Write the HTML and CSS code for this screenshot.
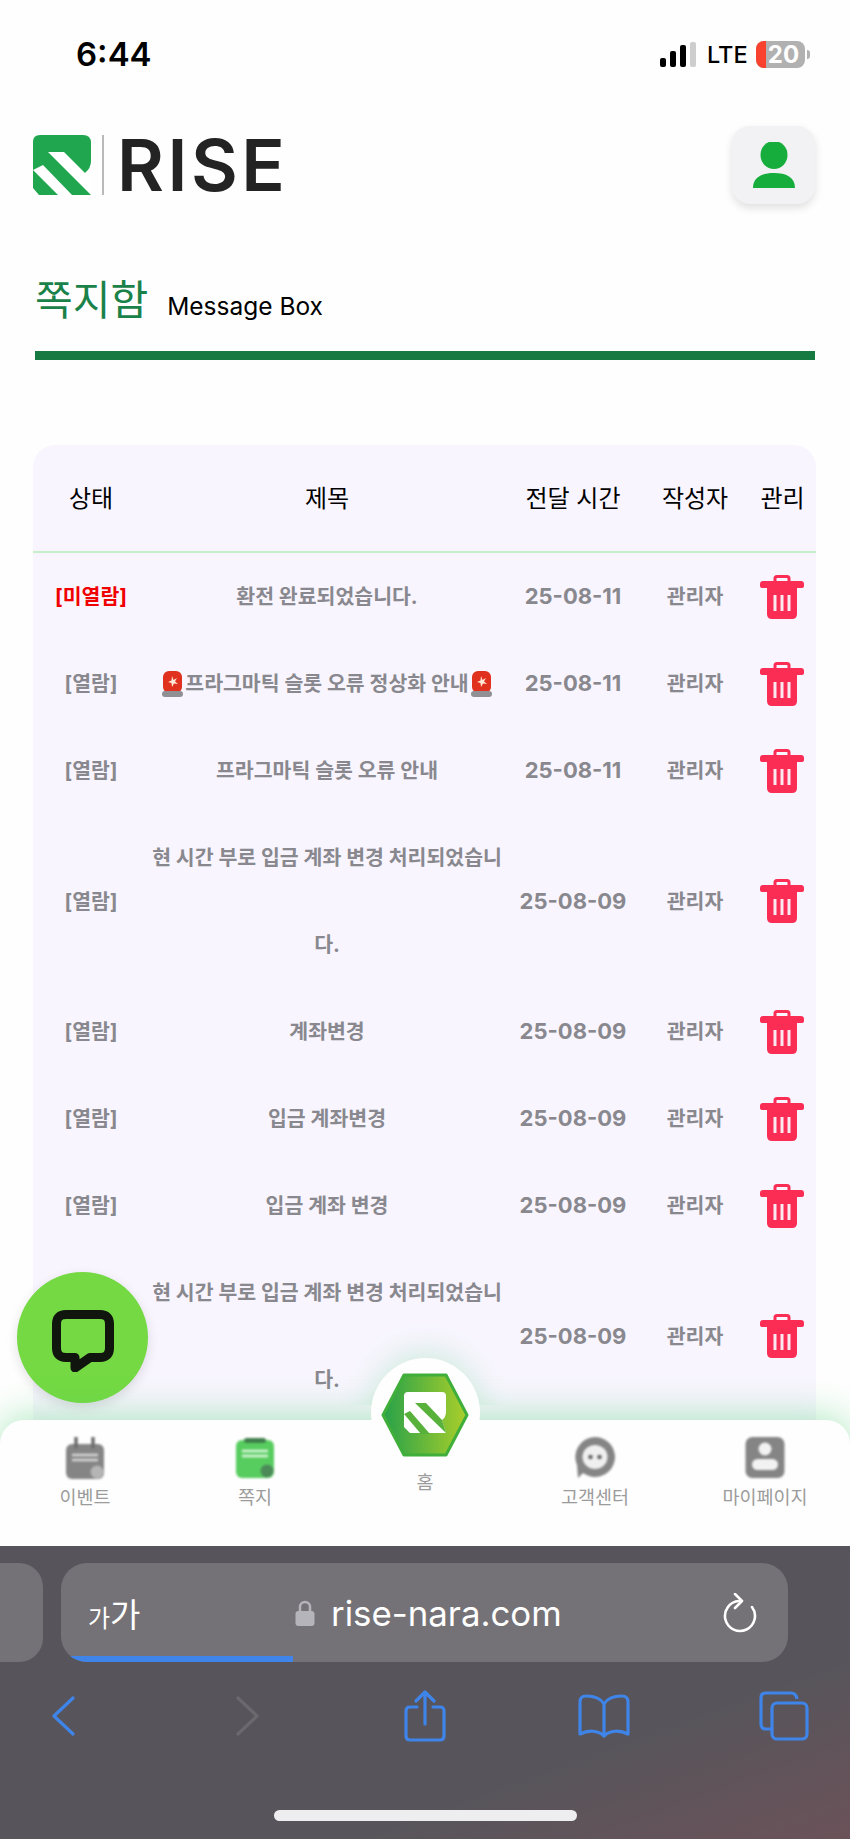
FILE: index.html
```html
<!DOCTYPE html>
<html lang="ko">
<head>
  <meta charset="UTF-8">
  <meta name="viewport" content="width=device-width, initial-scale=1.0">
  <title>RISE 쪽지함</title>
  <link rel="stylesheet" href="styles.css">
</head>
<body>
  <div class="page">
    <div class="status-bar">
      <span class="clock">6:44</span>
      <div class="status-right">
        <div class="signal">
          <i class="bar-1"></i><i class="bar-2"></i><i class="bar-3"></i><i class="bar-4"></i>
        </div>
        <span class="network">LTE</span>
        <div class="battery"><span class="battery-red"></span><span class="battery-num">20</span></div>
        <span class="battery-tip"></span>
      </div>
    </div>

    <header class="site-header">
      <div class="logo">
        <svg class="logo-mark" viewBox="0 0 59 60">
          <path d="M7 0H50Q58 0 58 8V26Q58 33 52 38L59 60H6L0 53V7Q0 0 7 0Z" fill="#1fa64f"/>
          <path d="M15 17H31L52 38H60V61H59Z" fill="#fff"/>
          <path d="M0 35L10 30L40 61H26Z" fill="#fff"/>
        </svg>
        <span class="logo-line"></span>
        <span class="logo-text">RISE</span>
      </div>
      <button class="profile-button">
        <svg viewBox="0 0 44 46" width="44" height="46">
          <ellipse cx="22" cy="13" rx="13.5" ry="14" fill="#17ad3c"/>
          <path d="M1 46C1 35 10 31 22 31S43 35 43 46Z" fill="#17ad3c"/>
        </svg>
      </button>
    </header>

    <div class="title-row">
      <h1>쪽지함</h1>
      <span class="title-en">Message Box</span>
    </div>

    <div class="message-card">
      <table class="message-table">
        <thead>
          <tr>
            <th class="col-status">상태</th>
            <th class="col-title">제목</th>
            <th class="col-time">전달 시간</th>
            <th class="col-author">작성자</th>
            <th class="col-manage">관리</th>
          </tr>
        </thead>
        <tbody>
          <tr>
            <td class="unread">[미열람]</td>
            <td>환전 완료되었습니다.</td>
            <td class="date">25-08-11</td>
            <td>관리자</td>
            <td class="manage"><svg class="trash"><use href="#trash-icon"/></svg></td>
          </tr>
          <tr>
            <td>[열람]</td>
            <td><svg class="siren"><use href="#siren-icon"/></svg>프라그마틱 슬롯 오류 정상화 안내<svg class="siren"><use href="#siren-icon"/></svg></td>
            <td class="date">25-08-11</td>
            <td>관리자</td>
            <td class="manage"><svg class="trash"><use href="#trash-icon"/></svg></td>
          </tr>
          <tr>
            <td>[열람]</td>
            <td>프라그마틱 슬롯 오류 안내</td>
            <td class="date">25-08-11</td>
            <td>관리자</td>
            <td class="manage"><svg class="trash"><use href="#trash-icon"/></svg></td>
          </tr>
          <tr>
            <td>[열람]</td>
            <td>현 시간 부로 입금 계좌 변경 처리되었습니다.</td>
            <td class="date">25-08-09</td>
            <td>관리자</td>
            <td class="manage"><svg class="trash"><use href="#trash-icon"/></svg></td>
          </tr>
          <tr>
            <td>[열람]</td>
            <td>계좌변경</td>
            <td class="date">25-08-09</td>
            <td>관리자</td>
            <td class="manage"><svg class="trash"><use href="#trash-icon"/></svg></td>
          </tr>
          <tr>
            <td>[열람]</td>
            <td>입금 계좌변경</td>
            <td class="date">25-08-09</td>
            <td>관리자</td>
            <td class="manage"><svg class="trash"><use href="#trash-icon"/></svg></td>
          </tr>
          <tr>
            <td>[열람]</td>
            <td>입금 계좌 변경</td>
            <td class="date">25-08-09</td>
            <td>관리자</td>
            <td class="manage"><svg class="trash"><use href="#trash-icon"/></svg></td>
          </tr>
          <tr>
            <td>[열람]</td>
            <td>현 시간 부로 입금 계좌 변경 처리되었습니다.</td>
            <td class="date">25-08-09</td>
            <td>관리자</td>
            <td class="manage"><svg class="trash"><use href="#trash-icon"/></svg></td>
          </tr>
        </tbody>
      </table>
    </div>

    <button class="chat-button">
      <svg viewBox="0 0 62 62" width="62" height="62">
        <path d="M14 4.500H48Q57.500 4.500 57.500 14V38Q57.500 47.500 48 47.500H38L23 58V47.500H14Q4.500 47.500 4.500 38V14Q4.500 4.500 14 4.500Z" fill="none" stroke="#10160e" stroke-width="9" stroke-linejoin="round"/>
      </svg>
    </button>

    <nav class="bottom-nav">
      <a class="nav-item">
        <svg class="nav-icon" viewBox="0 0 40 42">
          <rect x="1" y="7" width="38" height="35" rx="6" fill="#858585"/>
          <path d="M11 1V10M28 1V10" stroke="#6d6d6d" stroke-width="3.500" stroke-linecap="round"/>
          <path d="M7 18H33M7 23H33" stroke="#d6d6d6" stroke-width="2.500"/>
          <circle cx="32" cy="35" r="6.500" fill="#b5b5b5"/>
        </svg>
        <span>이벤트</span>
      </a>
      <a class="nav-item">
        <svg class="nav-icon" viewBox="0 0 40 42">
          <rect x="1" y="3" width="38" height="38" rx="6" fill="#58cd5f"/>
          <rect x="9" y="1" width="22" height="5" rx="2.500" fill="#3f7f4b"/>
          <path d="M7 14H33M7 19H33" stroke="#d8f5da" stroke-width="2.500"/>
          <circle cx="32" cy="34" r="6.500" fill="#4c8a58"/>
        </svg>
        <span>쪽지</span>
      </a>
      <a class="nav-item nav-home">
        <span class="home-circle">
          <svg viewBox="0 0 88 84" width="88" height="84">
            <defs>
              <linearGradient id="hexFill" x1="0" y1="0" x2="1" y2="0">
                <stop offset="0" stop-color="#27a14a"/>
                <stop offset="1" stop-color="#aacf2a"/>
              </linearGradient>
            </defs>
            <path d="M23 2H65L86 42L65 82H23L2 42Z" fill="url(#hexFill)" stroke="#3fae3a" stroke-width="3" stroke-linejoin="round"/>
            <path d="M27 19H61Q65 19 65 23V39Q65 44 61 47L65 60H29L23 54V23Q23 19 27 19Z" fill="#fff"/>
            <path d="M34 30H45L61 47L65 60Z" fill="#58b13a"/>
            <path d="M23 41L29 38L49 61H40Z" fill="#58b13a"/>
          </svg>
        </span>
        <span>홈</span>
      </a>
      <a class="nav-item">
        <svg class="nav-icon" viewBox="0 0 40 42">
          <path d="M20 0A20 20 0 1 1 8 36L3 41L2 28A20 20 0 0 1 20 0Z" fill="#858585"/>
          <ellipse cx="20" cy="20" rx="12.500" ry="12" fill="#efefef"/>
          <circle cx="15.500" cy="20" r="2.300" fill="#666"/>
          <circle cx="24.500" cy="20" r="2.300" fill="#666"/>
        </svg>
        <span>고객센터</span>
      </a>
      <a class="nav-item">
        <svg class="nav-icon" viewBox="0 0 40 42">
          <rect x="0.500" y="0" width="39" height="41" rx="7" fill="#858585"/>
          <circle cx="20" cy="12" r="6.500" fill="#f2f2f2"/>
          <rect x="7" y="22" width="26" height="11" rx="5.500" fill="#f2f2f2"/>
        </svg>
        <span>마이페이지</span>
      </a>
    </nav>
  </div>

  <div class="safari">
    <div class="url-row">
      <div class="tab-peek"></div>
      <div class="url-bar">
        <span class="text-size"><small>가</small>가</span>
        <div class="url-center">
          <svg viewBox="0 0 20 28" width="20" height="28">
            <path d="M5 13V8A5 5 0 0 1 15 8V13" fill="none" stroke="#b4b4ba" stroke-width="2.500"/>
            <rect x="0.500" y="12" width="19" height="15" rx="3" fill="#b4b4ba"/>
          </svg>
          <span class="url-text">rise-nara.com</span>
        </div>
        <svg class="reload" viewBox="0 0 34 40" width="34" height="40" fill="none" stroke="#fff" stroke-width="2.600" stroke-linecap="round" stroke-linejoin="round">
          <path d="M16 8A15 15 0 1 0 29 14"/>
          <path d="M12 1L19 8L12 15"/>
        </svg>
        <span class="progress"></span>
      </div>
    </div>
    <div class="toolbar">
      <svg viewBox="0 0 24 40" width="24" height="40" fill="none" stroke="#3f84e8" stroke-width="3.200" stroke-linecap="round" stroke-linejoin="round"><path d="M22 2L3 20L22 38"/></svg>
      <svg class="tool-forward" viewBox="0 0 24 40" width="24" height="40" fill="none" stroke="#6b696e" stroke-width="3.200" stroke-linecap="round" stroke-linejoin="round"><path d="M2 2L21 20L2 38"/></svg>
      <svg class="tool-share" viewBox="0 0 42 52" width="42" height="52" fill="none" stroke="#3f84e8" stroke-width="3.200" stroke-linecap="round" stroke-linejoin="round"><path d="M13 17H6Q2 17 2 21V46Q2 50 6 50H36Q40 50 40 46V21Q40 17 36 17H29"/><path d="M21 34V3M12 11L21 2L30 11"/></svg>
      <svg class="tool-book" viewBox="0 0 52 44" width="52" height="44" fill="none" stroke="#3f84e8" stroke-width="3.200" stroke-linecap="round" stroke-linejoin="round"><path d="M26 10C22 3 14 2 8 2Q2 2 2 8V40C10 36 20 36 26 42C32 36 42 36 50 40V8Q50 2 44 2C38 2 30 3 26 10ZM26 10V42"/></svg>
      <svg class="tool-tabs" viewBox="0 0 50 50" width="50" height="50" fill="none" stroke="#3f84e8" stroke-width="3.200" stroke-linejoin="round"><path d="M12 38H7Q2 38 2 33V7Q2 2 7 2H32Q37 2 38 8"/><rect x="13" y="12" width="35" height="36" rx="5"/></svg>
    </div>
    <div class="home-indicator"></div>
  </div>

  <svg class="icon-defs" width="0" height="0">
    <symbol id="trash-icon" viewBox="0 0 44 44">
      <path d="M15 6V3.500Q15 1.500 17 1.500H27Q29 1.500 29 3.500V6" fill="none" stroke="#fb2d55" stroke-width="3"/>
      <path d="M3 6H41Q44 6 44 9V11Q44 13 41 13H3Q0 13 0 11V9Q0 6 3 6Z" fill="#fb2d55"/>
      <path d="M7 13H37V39Q37 44 32 44H12Q7 44 7 39Z" fill="#fb2d55"/>
      <path d="M15 20V36M22 20V36M29 20V36" stroke="#fbe8f0" stroke-width="3"/>
    </symbol>
    <symbol id="siren-icon" viewBox="0 0 23 28">
      <rect x="2" y="1" width="19" height="22" rx="6" fill="#e0301e"/>
      <path d="M11 6L12.500 10L16 8L14 11.500L17 14L13 13.500L11 17L10.500 13L7 12L10.500 10.500Z" fill="#ffe9d8"/>
      <rect x="1" y="21" width="21" height="6" rx="3" fill="#8f8f94"/>
    </symbol>
  </svg>
</body>
</html>
```

FILE: styles.css
```css
* {
  box-sizing: border-box;
}
body {
  margin: 0;
  width: 850px;
  height: 1839px;
  overflow: hidden;
  display: flex;
  flex-direction: column;
  font-family: Inter, "Noto Sans CJK KR", sans-serif;
  background-color: #57555b;
  color: black;
}
button {
  border: none;
  padding: 0;
}
.page {
  position: relative;
  height: 1546px;
  overflow: hidden;
  background-color: #fefefe;
}

/* status bar */
.status-bar {
  height: 108px;
  display: flex;
  justify-content: space-between;
  align-items: center;
  padding: 0 40px 0 76px;
}
.clock {
  font-size: 33px;
  font-weight: 600;
}
.status-right {
  display: flex;
  align-items: center;
}
.signal {
  display: flex;
  align-items: flex-end;
  gap: 4px;
  height: 25px;
  margin-right: 11px;
}
.signal i {
  width: 6px;
  background-color: #000;
  border-radius: 2px;
}
.bar-1 { height: 9px; }
.bar-2 { height: 16px; }
.bar-3 { height: 22px; }
.signal .bar-4 { height: 25px; background-color: #cdcdcd; }
.network {
  font-size: 23.5px;
  font-weight: 500;
  width: 49px;
}
.battery {
  position: relative;
  width: 49px;
  height: 27px;
  border-radius: 8px;
  overflow: hidden;
  background-color: #b1b1b1;
  color: white;
  font-size: 24px;
  font-weight: 700;
  line-height: 27px;
  text-align: center;
}
.battery-red {
  position: absolute;
  left: 0;
  top: 0;
  width: 10px;
  height: 27px;
  background-color: #f8412e;
}
.battery-num {
  position: relative;
  margin-left: 6px;
}
.battery-tip {
  width: 3px;
  height: 9px;
  margin-left: 2px;
  background-color: #b1b1b1;
  border-radius: 0 3px 3px 0;
}

/* header */
.site-header {
  margin-top: 18px;
  display: flex;
  justify-content: space-between;
  align-items: center;
  padding: 0 35px 0 33px;
}
.logo {
  display: flex;
  align-items: center;
  height: 60px;
}
.logo-mark {
  width: 59px;
  height: 60px;
}
.logo-line {
  width: 2px;
  height: 60px;
  margin: 0 13px 0 10px;
  background-color: #b9b9b9;
}
.logo-text {
  font-size: 72px;
  font-weight: 600;
  line-height: 60px;
  letter-spacing: 3.5px;
  color: #232323;
}
.profile-button {
  width: 83px;
  height: 78px;
  display: flex;
  align-items: center;
  justify-content: center;
  border-radius: 18px;
  background-color: #f2f2f4;
  box-shadow: 0 4px 8px rgba(0, 0, 0, 0.12);
}

/* title */
.title-row {
  margin: 70px 35px 0;
  height: 86px;
  display: flex;
  align-items: baseline;
  gap: 19px;
  border-bottom: 9px solid #177a41;
}
.title-row h1 {
  margin: 0;
  font-size: 41px;
  font-weight: 400;
  line-height: 52px;
  color: #1a8248;
}
.title-en {
  font-size: 24.5px;
}

/* table */
.message-card {
  margin: 85px 34px 0 33px;
  border-radius: 22px 22px 0 0;
  background-color: #f8f5fe;
}
.message-table {
  width: 783px;
  table-layout: fixed;
  border-collapse: collapse;
  text-align: center;
}
.message-table th {
  height: 107px;
  padding: 0 0 3px;
  font-size: 24px;
  font-weight: 400;
  border-bottom: 2px solid #c6eec9;
}
.col-status { width: 116px; }
.col-title { width: 356px; }
.col-time { width: 136px; }
.col-author { width: 108px; }
.message-table td {
  padding: 0 2px;
  font-size: 20.5px;
  font-weight: 700;
  line-height: 87px;
  color: #88888e;
  word-break: break-all;
}
.message-table td.unread {
  color: #f00000;
}
.message-table td.date {
  font-size: 22px;
}
.message-table td.manage {
  padding: 0 3px 0 1px;
}
.trash {
  display: block;
  width: 44px;
  height: 44px;
  margin: 0 auto;
}
.siren {
  width: 23px;
  height: 28px;
  margin: 0 1px;
  vertical-align: -7px;
}
.icon-defs {
  position: absolute;
}

/* floating chat */
.chat-button {
  position: absolute;
  left: 17px;
  top: 1272px;
  width: 131px;
  height: 131px;
  display: flex;
  align-items: center;
  justify-content: center;
  padding-top: 6px;
  border-radius: 50%;
  background-color: #74d943;
  box-shadow: 0 4px 12px rgba(0, 0, 0, 0.12);
}

/* bottom nav */
.bottom-nav {
  position: absolute;
  left: 0;
  top: 1420px;
  width: 850px;
  height: 126px;
  display: flex;
  padding-top: 17px;
  border-radius: 24px 24px 0 0;
  background-color: #fefefe;
  box-shadow: 0 -4px 36px rgba(70, 205, 110, 0.42);
}
.nav-item {
  flex: 1;
  display: flex;
  flex-direction: column;
  align-items: center;
  font-size: 18.5px;
  line-height: 26px;
  color: #9b9b9b;
}
.nav-icon {
  width: 40px;
  height: 42px;
  margin-bottom: 5px;
  filter: blur(1px);
}
.home-circle {
  position: relative;
  display: flex;
  align-items: center;
  justify-content: center;
  width: 109px;
  height: 109px;
  margin-top: -79px;
  margin-bottom: 2px;
  border-radius: 50%;
  background-color: #fefefe;
}
.home-circle::before {
  content: "";
  position: absolute;
  inset: 0;
  border-radius: 50%;
  box-shadow: 0 -6px 30px rgba(70, 205, 110, 0.22);
  clip-path: inset(-50px -50px 62px -50px);
}
.home-circle svg {
  position: relative;
  top: 2px;
}

/* browser chrome */
.safari {
  flex: 1;
  position: relative;
  background: linear-gradient(160deg, #57555b 70%, #6b5259 100%);
}
.url-row {
  display: flex;
  gap: 18px;
  padding-top: 17px;
}
.tab-peek {
  width: 43px;
  height: 99px;
  border-radius: 0 24px 24px 0;
  background-color: #747277;
}
.url-bar {
  position: relative;
  width: 727px;
  height: 99px;
  display: flex;
  align-items: center;
  padding: 0 31px 0 27px;
  border-radius: 26px;
  overflow: hidden;
  background-color: #747277;
  color: white;
}
.text-size {
  width: 119px;
  font-size: 33px;
}
.text-size small {
  font-size: 24px;
}
.url-center {
  flex: 1;
  display: flex;
  align-items: center;
  gap: 16px;
  padding-left: 88px;
}
.url-text {
  font-size: 34.8px;
}
.progress {
  position: absolute;
  left: 0;
  bottom: 0;
  width: 232px;
  height: 6px;
  background-color: #3f84e8;
}
.toolbar {
  display: flex;
  align-items: center;
  height: 56px;
  margin-top: 26px;
  padding-left: 51px;
}
.tool-forward { margin-left: 161px; }
.tool-share { margin-left: 144px; }
.tool-book { margin-left: 132px; }
.tool-tabs { margin-left: 129px; }
.home-indicator {
  width: 303px;
  height: 11px;
  margin: 66px auto 0;
  border-radius: 6px;
  background-color: #eeeef0;
}
```
